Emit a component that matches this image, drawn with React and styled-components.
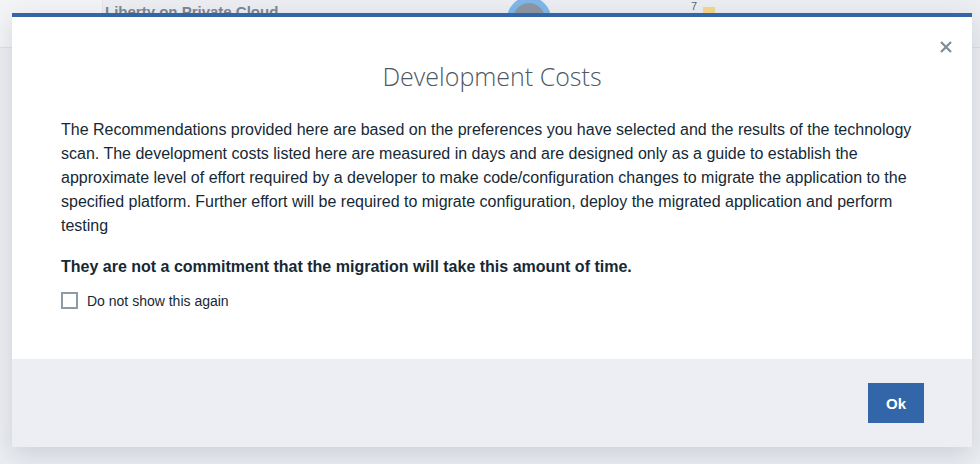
import React, { useState } from "react";
import styled, { createGlobalStyle } from "styled-components";

const GlobalStyle = createGlobalStyle`
  html, body {
    margin: 0;
    padding: 0;
    width: 980px;
    height: 464px;
    overflow: hidden;
    font-family: "Liberation Sans", Arial, sans-serif;
  }
  * { box-sizing: border-box; }
`;

const Page = styled.div`
  position: relative;
  width: 980px;
  height: 464px;
  background: #eceef2;
`;

const Header = styled.div`
  height: 48px;
  border-bottom: 1px solid #dde1e6;
  display: flex;
  align-items: flex-start;
`;

const SideCell = styled.div`
  width: 103px;
  height: 100%;
  background: #f3f4f6;
  border-right: 1px solid #e2e5ea;
  margin-right: 2px;
`;

const AppName = styled.div`
  font-size: 15px;
  font-weight: bold;
  color: #7d8690;
  margin-top: 3px;
  width: 402px;
`;

const Ring = styled.div`
  width: 44px;
  height: 44px;
  border-radius: 50%;
  background: #8d97a3;
  border: 6px solid #80b7e8;
  margin-top: -3px;
`;

const Legend = styled.div`
  margin-left: 140px;
  display: flex;
  align-items: flex-start;
  gap: 6px;
  font-size: 11px;
  color: #5a6570;
`;

const Swatch = styled.span`
  display: block;
  width: 12px;
  height: 12px;
  margin-top: 7px;
  background: #f5d88a;
`;

const Modal = styled.div`
  position: absolute;
  left: 12px;
  top: 13px;
  width: 960px;
  height: 434px;
  background: #fff;
  border-top: 4px solid #3366a8;
  box-shadow: 0 8px 24px rgba(60, 70, 90, 0.18);
  display: flex;
  flex-direction: column;
`;

const Body = styled.div`
  flex: 1;
  position: relative;
  padding: 43px 49px 0 49px;
`;

const Close = styled.button`
  position: absolute;
  right: 18px;
  top: 22px;
  width: 16px;
  height: 16px;
  padding: 0;
  border: 0;
  background: none;
  cursor: pointer;
  display: grid;
  place-items: center;
`;

const Title = styled.h2`
  margin: 0 0 26px;
  text-align: center;
  font-family: "Open Sans", "Liberation Sans", sans-serif;
  font-weight: 300;
  font-size: 25px;
  line-height: 32px;
  color: #4e5864;
`;

const Text = styled.p`
  margin: 0;
  font-size: 16px;
  line-height: 24px;
  color: #152935;
  width: 862px;
`;

const Strong = styled(Text)`
  font-weight: bold;
  margin-top: 17px;
`;

const CheckRow = styled.label`
  margin-top: 13px;
  display: flex;
  align-items: center;
  gap: 9px;
  font-size: 14px;
  color: #152935;
  cursor: pointer;
`;

const Box = styled.span`
  width: 17px;
  height: 17px;
  border: 2px solid #8c9ba5;
  background: #fff;
  display: grid;
  place-items: center;
`;

const Footer = styled.div`
  height: 88px;
  background: #eceef3;
  display: flex;
  justify-content: flex-end;
  align-items: center;
  padding-right: 48px;
`;

const OkButton = styled.button`
  width: 56px;
  height: 40px;
  border: 0;
  background: #3366a8;
  color: #fff;
  font-family: "Liberation Sans", Arial, sans-serif;
  font-weight: bold;
  font-size: 15px;
  cursor: pointer;
`;

export default function App() {
  const [checked, setChecked] = useState(false);
  return (
    <>
      <GlobalStyle />
      <Page>
        <Header>
          <SideCell />
          <AppName>Liberty on Private Cloud</AppName>
          <Ring />
          <Legend>
            <span>7</span>
            <Swatch />
          </Legend>
        </Header>
        <Modal>
          <Body>
            <Close aria-label="Close">
              <svg width="12" height="12" viewBox="0 0 12 12">
                <path d="M1 1L11 11M11 1L1 11" stroke="#7f8c97" strokeWidth="2.2" />
              </svg>
            </Close>
            <Title>Development Costs</Title>
            <Text>
              The Recommendations provided here are based on the preferences you have selected and the results of the technology scan. The development costs listed here are measured in days and are designed only as a guide to establish the approximate level of effort required by a developer to make code/configuration changes to migrate the application to the specified platform. Further effort will be required to migrate configuration, deploy the migrated application and perform testing
            </Text>
            <Strong>They are not a commitment that the migration will take this amount of time.</Strong>
            <CheckRow onClick={() => setChecked(!checked)}>
              <Box>
                {checked && (
                  <svg width="10" height="10" viewBox="0 0 10 10">
                    <path d="M1 5l3 3 5-6" stroke="#3366a8" strokeWidth="2" fill="none" />
                  </svg>
                )}
              </Box>
              Do not show this again
            </CheckRow>
          </Body>
          <Footer>
            <OkButton>Ok</OkButton>
          </Footer>
        </Modal>
      </Page>
    </>
  );
}
